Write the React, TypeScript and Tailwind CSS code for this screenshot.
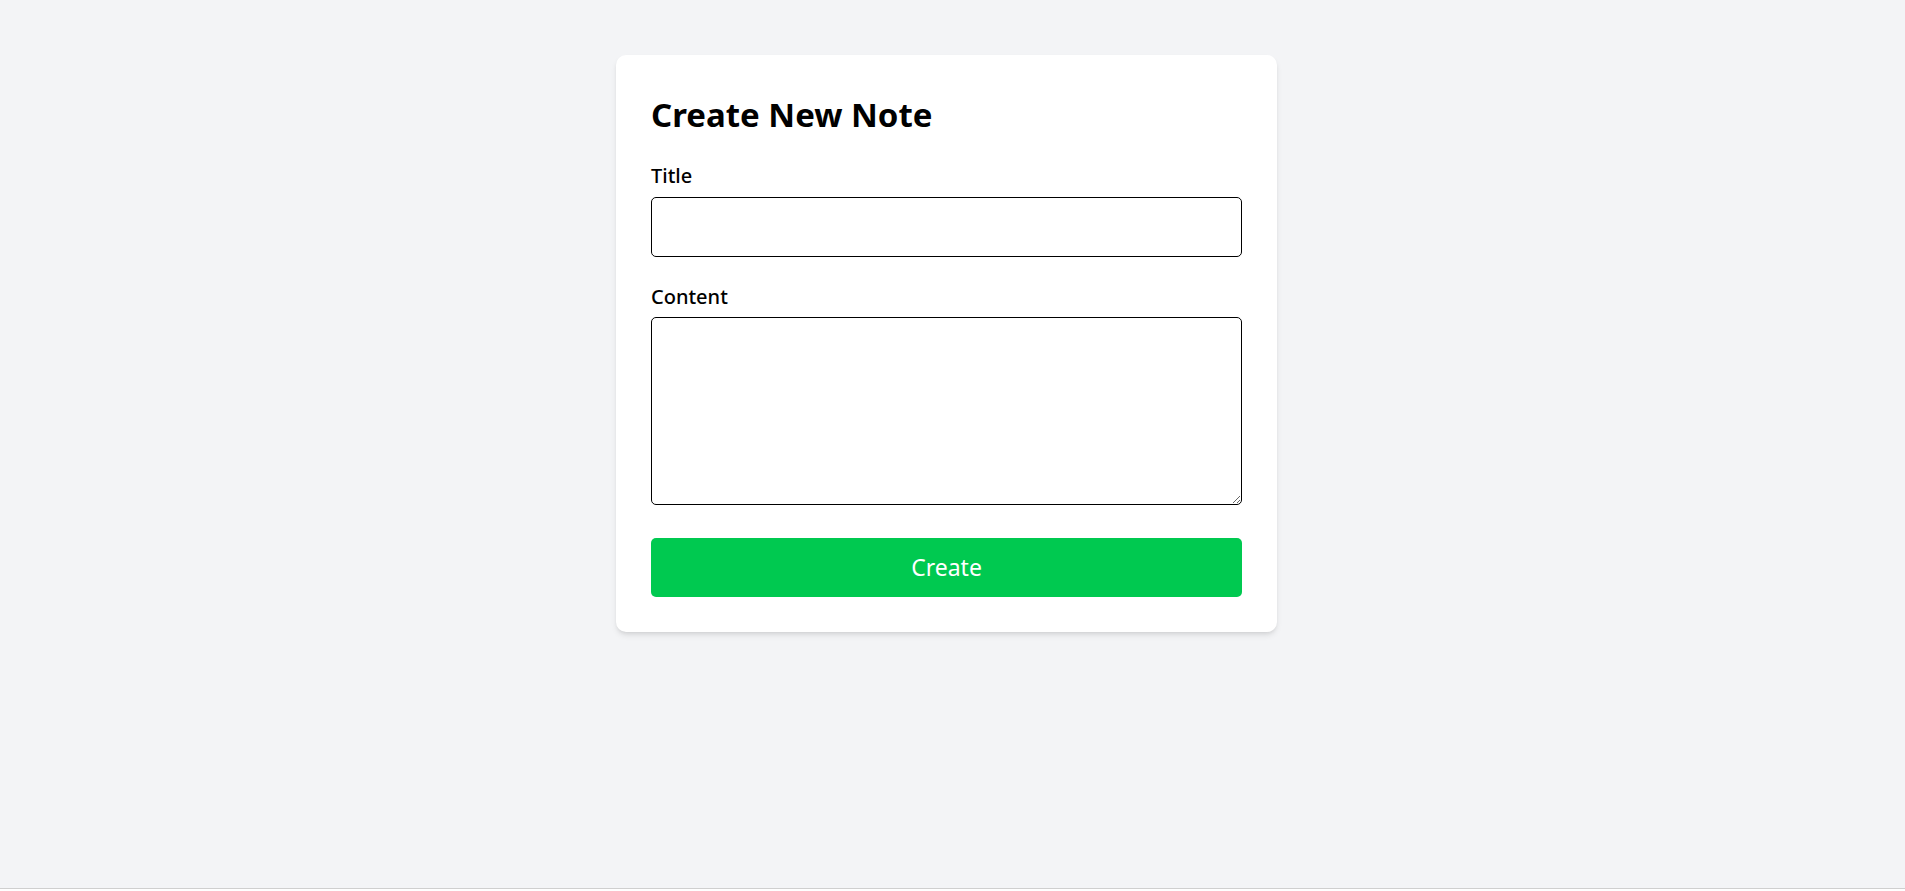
export default function App() {
  return (
    <div
      className="h-[889px] bg-[#f3f4f6] border-b border-[#cfcfcf] flex justify-center pr-[12px]"
      style={{ fontFamily: '"Noto Sans", "Open Sans", sans-serif' }}
    >
      <div className="mt-[55px] self-start w-[661px] bg-white rounded-[10px] shadow-md p-[35px] text-black">
        <h1 className="text-[33px] leading-[50px] font-bold mb-[22px]">Create New Note</h1>
        <form className="flex flex-col" onSubmit={(e) => e.preventDefault()}>
          <label className="text-[20px] leading-[28px] font-medium mb-[7px]">Title</label>
          <input
            type="text"
            className="h-[60px] w-full border border-black rounded-[5px] px-3 outline-none"
          />
          <label className="text-[20px] leading-[28px] font-medium mt-[26px] mb-[6px]">Content</label>
          <textarea className="h-[188px] w-full border border-black rounded-[5px] px-3 py-2 outline-none" />
          <button
            type="submit"
            className="mt-[33px] h-[59px] w-full rounded-[5px] bg-[#00c950] text-white text-[23px]"
          >
            Create
          </button>
        </form>
      </div>
    </div>
  );
}
